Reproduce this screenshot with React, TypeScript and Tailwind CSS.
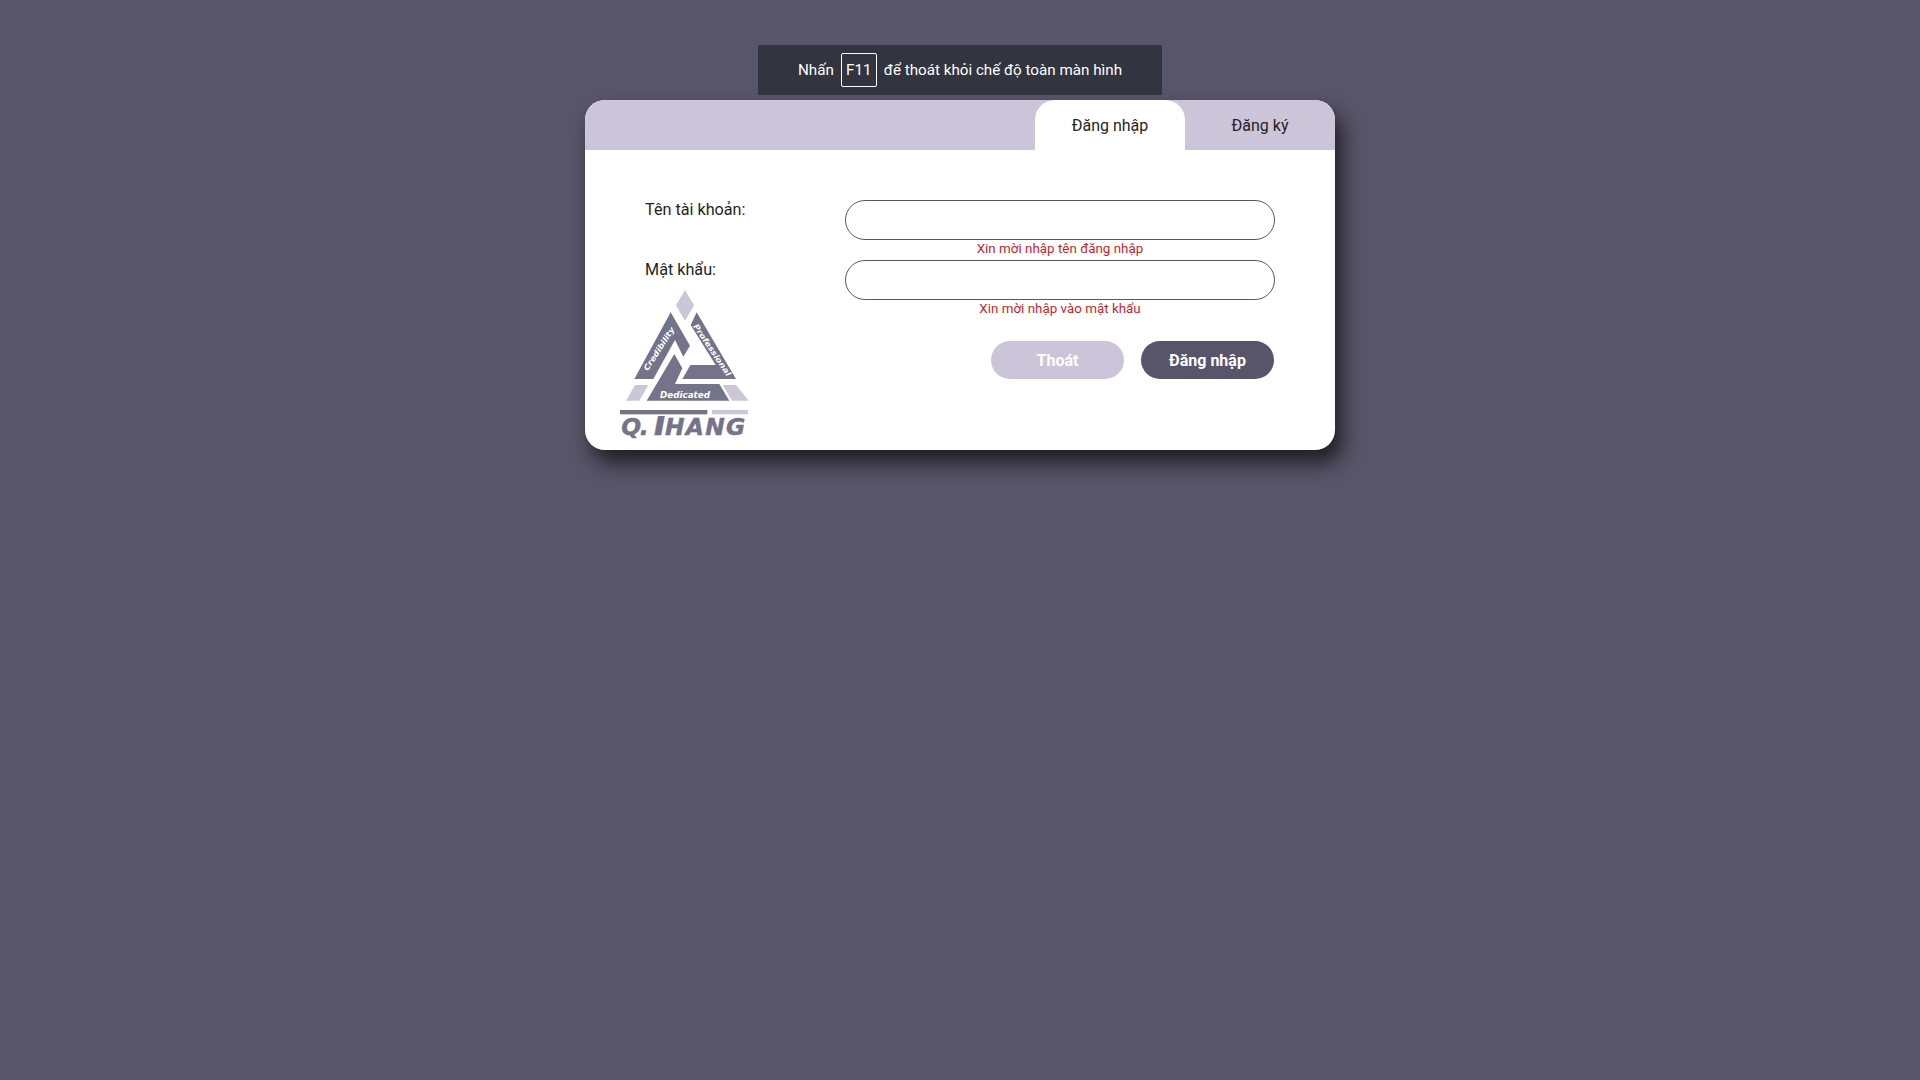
const LOGO_DARK = '#75738a';
const LOGO_LIGHT = '#cdc6d9';
const LOGO_FONT = "'DejaVu Sans', sans-serif";

function Logo() {
  return (
    <svg width="130" height="152" viewBox="57 24 390 456" className="block overflow-visible">
      <polygon points="255,30 282,76 255,122 228,76" fill={LOGO_LIGHT} />
      {/* three arms of the knot */}
      <polygon points="212,97 270,197 250,230 225,180 160,297 103,297" fill={LOGO_DARK} />
      <polygon points="290,97 408,297 247,297 271,255 347,255 272,135" fill={LOGO_DARK} />
      <polygon points="223,222 247,265 225,312 358,312 388,362 140,362" fill={LOGO_DARK} />
      <polygon points="105,315 145,315 118,362 78,362" fill={LOGO_LIGHT} />
      <polygon points="368,315 408,315 446,362 396,362" fill={LOGO_LIGHT} />
      <g fontFamily={LOGO_FONT} fontWeight="700" fontStyle="italic" fill="#ffffff">
        <text transform="translate(143 274) rotate(-57)" fontSize="23" textLength="150" lengthAdjust="spacingAndGlyphs">Credibility</text>
        <text transform="translate(279 139) rotate(56)" fontSize="23" textLength="182" lengthAdjust="spacingAndGlyphs">Professional</text>
        <text x="180" y="354" fontSize="25" textLength="150" lengthAdjust="spacingAndGlyphs">Dedicated</text>
      </g>
      <text y="464" fontFamily={LOGO_FONT} fontWeight="700" fontStyle="italic" fontSize="70" fill={LOGO_DARK} stroke={LOGO_DARK} strokeWidth="1.5">
        <tspan x="64" letterSpacing="-4">Q.</tspan>
        <tspan x="146" fontSize="100">T</tspan>
        <tspan x="195" letterSpacing="4">HANG</tspan>
      </text>
      {/* the T's top is cut away by the rule above the name */}
      <rect x="140" y="386" width="90" height="22" fill="#ffffff" />
      <rect x="60" y="390" width="262" height="13" fill={LOGO_DARK} />
      <rect x="336" y="390" width="108" height="13" fill={LOGO_LIGHT} />
    </svg>
  );
}

export default function App() {
  return (
    <div className="relative min-h-screen bg-[#585469] pt-[100px] font-['Roboto',sans-serif]">
      {/* fullscreen hint */}
      <div className="absolute left-1/2 top-[45px] z-10 flex h-[50px] w-[404px] -translate-x-1/2 items-center justify-center gap-[7px] bg-[#32343f] text-[15.2px] text-white">
        <span>Nhấn</span>
        <span className="flex h-[34px] w-[36px] items-center justify-center rounded-[2px] border border-white">F11</span>
        <span>để thoát khỏi chế độ toàn màn hình</span>
      </div>

      <div className="mx-auto w-[750px] overflow-hidden rounded-[20px] bg-white shadow-[7px_13px_20px_rgba(0,0,0,0.65)]">
        <div className="flex h-[50px] justify-end bg-[#ccc5d9] text-[16px] text-[#1f1f24]">
          <button className="h-full w-[150px] rounded-t-[20px] bg-white pt-px">Đăng nhập</button>
          <button className="h-full w-[150px] pt-px">Đăng ký</button>
        </div>

        <div className="flex h-[300px] pt-[48px]">
          <div className="flex w-[260px] flex-col pl-[60px] text-[16.2px] text-[#1f1f24]">
            <label className="h-[60px]">Tên tài khoản:</label>
            <label className="h-[30px]">Mật khẩu:</label>
            <div className="-ml-[26px]">
              <Logo />
            </div>
          </div>

          <div className="flex w-[430px] flex-col pt-[2px]">
            <input className="h-[40px] w-full rounded-full border border-[#585469] px-4 outline-none" />
            <div className="h-[20px] text-center text-[13.4px] leading-[18px] text-[#c91f2b]">Xin mời nhập tên đăng nhập</div>
            <input className="h-[40px] w-full rounded-full border border-[#585469] px-4 outline-none" />
            <div className="h-[20px] text-center text-[13.4px] leading-[18px] text-[#c91f2b]">Xin mời nhập vào mật khẩu</div>
            <div className="mt-[21px] flex justify-end gap-[17px] pr-px">
              <button className="h-[38px] w-[133px] rounded-full bg-[#ccc5d9] pt-px text-[16px] font-bold text-white">Thoát</button>
              <button className="h-[38px] w-[133px] rounded-full bg-[#585469] pt-px text-[16px] font-bold text-white">Đăng nhập</button>
            </div>
          </div>
        </div>
      </div>
    </div>
  );
}
